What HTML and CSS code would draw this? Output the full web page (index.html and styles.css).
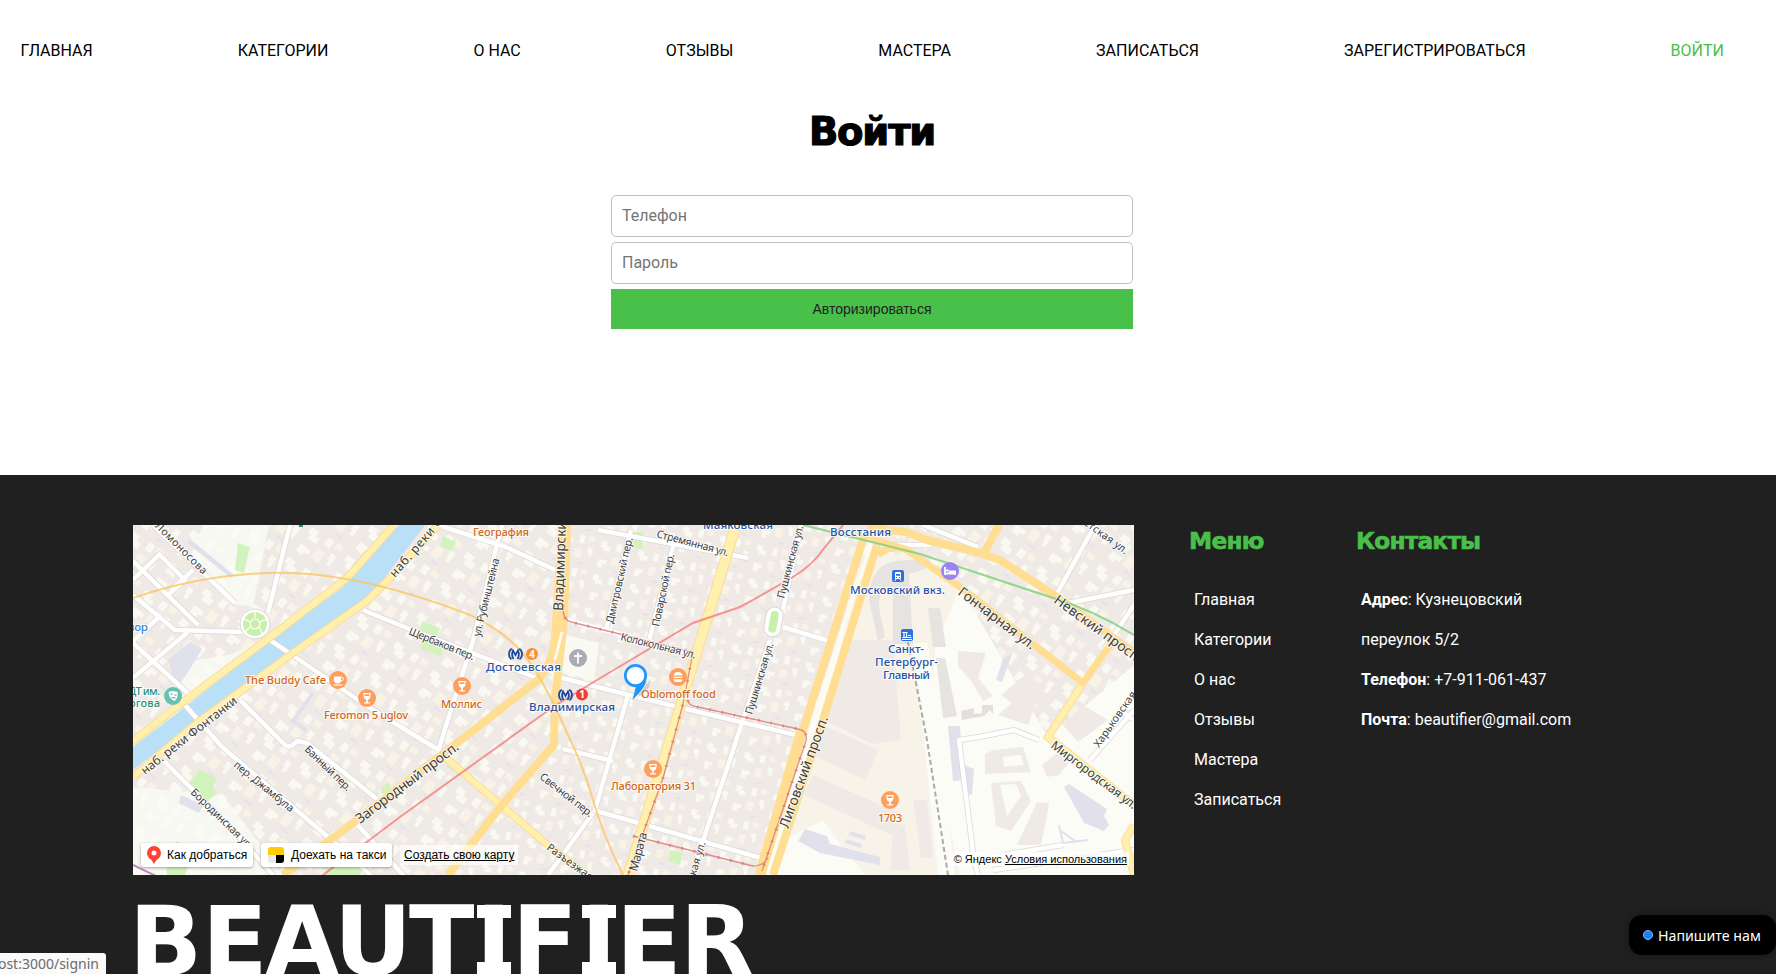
FILE: index.html
```html
<!DOCTYPE html>
<html lang="ru">
<head>
<meta charset="utf-8">
<title>Войти</title>
<link rel="stylesheet" href="styles.css">
</head>
<body>
<header class="header">
  <nav class="nav">
    <a class="nav-link">ГЛАВНАЯ</a>
    <a class="nav-link">КАТЕГОРИИ</a>
    <a class="nav-link">О НАС</a>
    <a class="nav-link">ОТЗЫВЫ</a>
    <a class="nav-link">МАСТЕРА</a>
    <a class="nav-link">ЗАПИСАТЬСЯ</a>
    <a class="nav-link">ЗАРЕГИСТРИРОВАТЬСЯ</a>
    <a class="nav-link active">ВОЙТИ</a>
  </nav>
</header>
<main class="main">
  <h1 class="title">Войти</h1>
  <form class="form">
    <input class="field" type="text" placeholder="Телефон">
    <input class="field" type="password" placeholder="Пароль">
    <button class="submit" type="button">Авторизироваться</button>
  </form>
</main>
<footer class="footer">
  <div class="left">
  <div class="map">
    <svg class="map-svg" width="1001" height="350" viewBox="0 0 1001 350">
      <defs>
        <pattern id="bl" width="46" height="38" patternUnits="userSpaceOnUse" patternTransform="rotate(38)">
          <rect width="46" height="38" fill="#f0eae7"/>
          <path d="M4 5h9v5h5v7H8v-5H4zM24 3h7v9h-7zM36 14h6v12h-4v-5h-2zM6 25h12v5h-4v4H6z" fill="#f9f8f1"/>
          <path d="M22 18h9v12h-9zM34 2h8v6h-8z" fill="#f8f2e7"/>
          <path d="M27 33h8v2h-8z" fill="#e3e3ea"/>
        </pattern>
        <pattern id="bm" width="38" height="34" patternUnits="userSpaceOnUse" patternTransform="rotate(14)">
          <rect width="38" height="34" fill="#f0eae7"/>
          <path d="M3 4h6v4h4v5H6v-3H3zM19 3h5v8h-5zM29 13h5v9h-3v-4h-2zM4 22h8v4H9v4H4z" fill="#f9f8f1"/>
          <path d="M17 17h7v9h-7zM28 2h6v5h-6z" fill="#f8f2e7"/>
          <path d="M22 30h6v2h-6z" fill="#e3e3ea"/>
        </pattern>
        <symbol id="glass" viewBox="-9 -9 18 18">
          <circle r="9" fill="#ff9d5c"/>
          <path d="M-3.800-5h7.600l-.5 4.200Q2.700 1.500.8 1.800V4.200H3V5.500H-3V4.200H-.8V1.800Q-2.700 1.500-3.300-.8z" fill="#fff"/>
          <path d="M-2.500-3.700h5l-.2 1.700h-4.600z" fill="#ff9d5c"/>
        </symbol>
        <symbol id="metro" viewBox="0 0 15 12">
          <path d="M3.800.8Q1 2.500 1 6t2.500 5.200M11.200.8Q14 2.500 14 6t-2.500 5.200M5.500 11Q3 7 5 2.500L7.500 7 10 2.500Q12 7 9.500 11" fill="none" stroke="#1b4aa5" stroke-width="1.800"/>
        </symbol>
      </defs>
      <rect width="1001" height="350" fill="#fafcf5"/>
      <path d="M0 0H430L420 218 317 350H0z" fill="url(#bl)"/>
      <path d="M430 0H740L630 350H317L420 218z" fill="url(#bm)"/>
      <path d="M70 0h66L120 82 95 78 58 30zM95 130l40-15-80 60-20-35zM0 262L90 270 150 350H0z" fill="#fafcf5" opacity=".75"/>
      <path d="M740 0H1001V140L915 212 827 62 740 20z" fill="url(#bl)"/>
      <path d="M730 30l44-2 53 34-25 60-5 90 30 138H640l50-155z" fill="#f8f3e9"/>
      <path d="M714 115h46l8 100-28 4-50-24zM690 200l55 25-12 30-55-25zM680 250l90 40-7 22-92-42zM760 300h12l5 45h-20zM780 275h14l6 58h-12z" fill="#f0eae7"/>
      <path d="M736 75q0-42 40-40h14l2 9-16 5 4 70h-20V62q-14-2-14 20l6 30-7 4zM795 83h12l6 39h-13zM803 133h9l12 58-14 2z" fill="#e7e3e1"/>
      <path d="M780 118l15 0 27 232h-17L790 205z" fill="#fafcf5"/>
      <path d="M825 126l28 2-8 25 15 18-10 5-12-20-13-15zM868 170l24-20 18 10-15 40-30-10 14-12zM860 225l30-3 8 25-46 2v-20zM858 258l30-2 10 20-20 30-15-5zM904 277l-20 43h24l5-24 3-18zM909 240l15-12 12 10-10 12-12 2zM930 200l20-20 25 15-30 22z" fill="#f0eae7"/>
      <path d="M867 260l16-1 5 12-14 20zM870 232l18-2 3 10-20 2z" fill="#fafcf5"/>
      <path d="M829 195l22-4 6-6 3 5V180h-11v8l-8 1v-6l-13 3z" fill="#e4dfdc"/>
      <path d="M815 201h12l2 38 12 5-2 26-6-1-2-14-11 1zM931 262l5-3 38 25-3 7 5 9-5 6-20-8zM870 134l9-5-10 28-6-2zM35 135l22-18 12 7-12 20-14 20z" fill="#e1e1ec"/>
      <path d="M926 300l4 18 25-3M928 306l14 10" fill="none" stroke="#e1e1ec" stroke-width="2"/>
      <path d="M650 315l40-20 22 30 20 25h-90z" fill="#fafcf5"/>
      <path d="M672 304l22 7 3 8 50 13v8l-60-12-22-12zM717 306l16 5-1 4-16-5zM713 314l16 5-1 4-16-5z" fill="#e1e1ec"/>
      <path d="M57 14l44 36-3 3-44-35zM48 270l22 10-4 8-20-10z" fill="#e1e1ec"/>
      <path d="M180 168l-20 28 14 10" fill="none" stroke="#e1e1ec" stroke-width="4"/>
      <path d="M433 110l33 8-5 38-37-10z" fill="#fafaf3"/>
      <!-- parks -->
      <g fill="#d3f3bd">
        <path d="M289 96l18 7-3 8 9 9-5 12-22-10 5-7-6-6zM61 252l5-8 18 10-4 8 4 6-15 13-12-14-2-8zM32 325l12-9 16 12-8 22H34zM248 263l8-6 3 10-11 2zM500 7h10v16h-10zM310 11l13 6-4 9-11-5zM537 325l13 3-3 12-12-4zM105 18l12 4-6 26-9-3z"/>
        <path d="M195 338l34 6-2 6h-34z"/>
      </g>
      <!-- river -->
      <path d="M266 0H292L250 55 230 75 162 125 65 195 0 245V222L52 182 140 112 209 63z" fill="#b9e0f7"/>
      <!-- side streets: outline, then surface -->
      <g fill="none" stroke="#dcd8d4" stroke-width="6" stroke-linejoin="round">
        <path d="M20 0L102 78M28 28L0 55M25 28L52 55 35 70M0 36L65 100M60 45L38 65M0 70l42 35 70 2M28 90l-30 28M55 107L0 153M0 118l60 55M157 0L135 88M137 115L240 185 304 224M50 178l40 45 130 110 20 20M30 235l70 70 40 45M107 175l45 45q5 4 12-4l10 2 75 60M230 85l44 18 130 50M222 297l50 55M305 226l35-110 29-116M305 0l68 22 60 28M425 152l63 16 65 16 114 27M498 5L473 105M541 18L515 120M495 170l-33 115M430 224l50 12M460 285l175 50M460 288l-45 62M668 0l-18 85M637 115l-28 83-42 127-10 30M650 102l46 14M465 5l150 28M748 20h50M922 72L962 0M935 78l66-13M1001 80l-30 45M957 235l44-50M1000 195l-15-12M845 350l-4-15-15-120 20-3 35-7 25 10M840 335l90-15M860 345l141-20M790 0l55 22"/>
      </g>
      <g fill="none" stroke="#fff" stroke-width="4.500" stroke-linejoin="round">
        <path d="M20 0L102 78M28 28L0 55M25 28L52 55 35 70M0 36L65 100M60 45L38 65M0 70l42 35 70 2M28 90l-30 28M55 107L0 153M0 118l60 55M157 0L135 88M137 115L240 185 304 224M50 178l40 45 130 110 20 20M30 235l70 70 40 45M107 175l45 45q5 4 12-4l10 2 75 60M230 85l44 18 130 50M222 297l50 55M305 226l35-110 29-116M305 0l68 22 60 28M425 152l63 16 65 16 114 27M434 95l120 32M498 5L473 105M541 18L515 120M495 170l-33 115M430 224l50 12M460 285l175 50M460 288l-45 62M668 0l-18 85M637 115l-28 83-42 127-10 30M650 102l46 14M465 5l150 28M748 20h50M922 72L962 0M935 78l66-13M1001 80l-30 45M957 235l44-50M1000 195l-15-12M845 350l-4-15-15-120 20-3 35-7 25 10M840 335l90-15M860 345l141-20M790 0l55 22"/>
      </g>
      <circle cx="122" cy="99" r="15" fill="#fff" stroke="#dcd8d4"/>
      <circle cx="122" cy="99" r="12" fill="#c9efad"/>
      <path d="M122 93v-6M117 97l-8-4M117 102l-6 6M126 102l4 8M127 97l7-3" stroke="#fff" stroke-width="1.200"/>
      <circle cx="122" cy="99" r="5" fill="none" stroke="#fff" stroke-width="1.200"/>
      <rect x="632" y="82" width="17" height="30" rx="8.500" fill="#fff" stroke="#dcd8d4" transform="rotate(10 641 97)"/>
      <rect x="636.500" y="86" width="8" height="22" rx="4" fill="#c9efad" transform="rotate(10 641 97)"/>
      <!-- yellow embankments -->
      <g fill="none" stroke="#fcdc96" stroke-width="8">
        <path d="M261 0L214 53 140 110 50 177 0 216M305 0L258 52 234 76 160 128 64 198 0 252M307 228l63 54 47 40 37 28M950 158L915 212 1001 280M1001 300l-9 15 9 35"/>
        <path d="M603 0L547 182 495 350" stroke-width="11"/>
      </g>
      <g fill="none" stroke="#fff0ae" stroke-width="6">
        <path d="M261 0L214 53 140 110 50 177 0 216M305 0L258 52 234 76 160 128 64 198 0 252M307 228l63 54 47 40 37 28M950 158L915 212 1001 280M1001 300l-9 15 9 35"/>
        <path d="M603 0L547 182 495 350" stroke-width="9"/>
      </g>
      <!-- orange avenues -->
      <g fill="none" stroke="#ffdd91" stroke-width="9" stroke-linejoin="round">
        <path d="M150 350L224 295 337 208 405 155q14-15 17-40l7-115M434 0l-3 95-9 80-1 45-54 62-52 68" stroke-width="8"/>
        <path d="M733 5L669 208 627 350M744 20L690 195 640 350" stroke-width="8"/>
        <path d="M669 205L627 350" stroke-width="11"/>
        <path d="M735 0l18 5 20 2 21 8 53 13 20 7 57 37 77 56M852 26l14-26" stroke-width="8"/>
        <path d="M722 8q30 10 52 17l53 37 123 96 30-42M745 30q14-12 30-5" stroke-width="7"/>
      </g>
      <path d="M738 20L681 190" stroke="#fffaf0" stroke-width="3"/>
      <path d="M422 135l7-28" stroke="#fffaf0" stroke-width="3"/>
      <!-- tram and metro lines -->
      <g fill="none">
        <path d="M430 80q-1 15 8 17l122 30-10 52-20 74-35 97M555 175q0 6 10 7l100 22q10 2 8 12l-44 130M500 311l120 30q10 0 15-8" stroke="#d6757c" stroke-width="1.300" opacity=".8"/>
        <path d="M430 80q-1 15 8 17l122 30-10 52-20 74-35 97M555 175q0 6 10 7l100 22q10 2 8 12l-44 130M500 311l120 30" stroke="#d6757c" stroke-width="3" stroke-dasharray="1.500 11" opacity=".8"/>
        <path d="M190 350L267 292 420 182 464 155 560 98 607 82 620 75 660 52Q680 40 692 22L710 0" stroke="#f26d6d" stroke-width="2" opacity=".7"/>
        <path d="M0 73Q80 46 157 48T337 90Q380 110 400 142T434 208Q450 240 460 275T490 350" stroke="#fbc665" stroke-width="2" opacity=".8"/>
        <path d="M670 0L787 29 920 73Q960 85 1001 110" stroke="#7ccf7c" stroke-width="2.200" opacity=".8"/>
        <path d="M0 340l25 12" stroke="#c08ac0" stroke-width="2"/>
        <path d="M775 117L794 215 815 350" stroke="#aaa" stroke-width="2" stroke-dasharray="5 3"/>
      </g>
      <!-- street names -->
      <g class="street">
        <text transform="translate(17 -3) rotate(45)" textLength="75">. Ломоносова</text>
        <text class="mid" transform="translate(262 53) rotate(-49)" textLength="92">наб. реки Фон</text>
        <text class="mid" transform="translate(12 250) rotate(-38)" textLength="118">наб. реки Фонтанки</text>
        <text transform="translate(275 109) rotate(22)" textLength="70">Щербаков пер.</text>
        <text transform="translate(347 112) rotate(-76)" textLength="80">ул. Рубинштейна</text>
        <text class="big" transform="translate(430 86) rotate(-88)" textLength="98">Владимирский</text>
        <text transform="translate(480 99) rotate(-77)" textLength="88">Дмитровский пер.</text>
        <text transform="translate(526 102) rotate(-78)" textLength="74">Поварской пер.</text>
        <text transform="translate(523 12) rotate(15)" textLength="74">Стремянная ул.</text>
        <text transform="translate(487 115) rotate(14)" textLength="77">Колокольная ул.</text>
        <text transform="translate(651 74) rotate(-75)" textLength="75">Пушкинская ул.</text>
        <text transform="translate(619 190) rotate(-73)" textLength="74">Пушкинская ул.</text>
        <text class="big" transform="translate(655 304) rotate(-70)" textLength="118">Лиговский просп.</text>
        <text class="big" transform="translate(227 299) rotate(-37)" textLength="125">Загородный просп.</text>
        <text transform="translate(171 225) rotate(44)" textLength="60">Банный пер.</text>
        <text transform="translate(100 241) rotate(39)" textLength="74">пер. Джамбула</text>
        <text transform="translate(57 268) rotate(44)" textLength="79">Бородинская ул</text>
        <text transform="translate(406 253) rotate(38)" textLength="64">Свечной пер.</text>
        <text transform="translate(413 324) rotate(36)" textLength="68">Разъезжая ул</text>
        <text class="mid" transform="translate(504 347) rotate(-75)" textLength="40">Марата</text>
        <text transform="translate(561 356) rotate(-73)" textLength="40">ская ул.</text>
        <text class="big" transform="translate(824 69) rotate(37)" textLength="93">Гончарная ул.</text>
        <text class="big" transform="translate(920 77) rotate(36)" textLength="105">Невский просп.</text>
        <text transform="translate(950 -1) rotate(36)" textLength="52">етская ул.</text>
        <text transform="translate(966 223) rotate(-55)" textLength="74">Харьковская у</text>
        <text class="mid" transform="translate(917 222) rotate(37)" textLength="104">Миргородская ул.</text>
        <text transform="translate(900 342) rotate(-7)" textLength="70" opacity=".3">Товарный пер.</text>
      </g>
      <!-- places -->
      <g class="place">
        <text x="340" y="11" textLength="56">География</text>
        <text x="112" y="159" textLength="81">The Buddy Cafe</text>
        <text x="191" y="194" textLength="84">Feromon 5 uglov</text>
        <text x="308" y="183" textLength="41">Моллис</text>
        <text x="508" y="173" textLength="75">Oblomoff food</text>
        <text x="478" y="265" textLength="85">Лаборатория 31</text>
        <text x="745" y="297" textLength="24">1703</text>
      </g>
      <g class="place station">
        <text x="570" y="4" textLength="70">Маяковская</text>
        <text x="697" y="11" textLength="61">Восстания</text>
        <text x="717" y="69" textLength="95">Московский вкз.</text>
        <text x="755" y="128" textLength="36">Санкт-</text>
        <text x="742" y="141" textLength="63">Петербург-</text>
        <text x="750" y="154" textLength="47">Главный</text>
        <text x="353" y="146" textLength="75">Достоевская</text>
        <text x="396" y="186" textLength="86">Владимирская</text>
        <text class="shop" x="-5" y="106" textLength="20">вор</text>
      </g>
      <g class="place theatre">
        <text x="-5" y="170" textLength="32">ДТ им.</text>
        <text x="-4" y="182" textLength="31">огова</text>
      </g>
      <path d="M166 0h4v2h-4z" fill="#25917f"/>
      <use href="#glass" x="225" y="164" width="18" height="18"/>
      <use href="#glass" x="320" y="152" width="18" height="18"/>
      <use href="#glass" x="511" y="235" width="18" height="18"/>
      <use href="#glass" x="748" y="266" width="18" height="18"/>
      <circle cx="205" cy="155" r="9" fill="#ff9d5c"/>
      <path d="M201 151.500h7v5q-1 2-3.500 2t-3.500-2z" fill="#fff"/>
      <path d="M200.500 160h9" stroke="#fff" stroke-width="1.200"/>
      <circle cx="208.500" cy="154" r="1.800" fill="none" stroke="#fff"/>
      <circle cx="545" cy="152" r="9" fill="#ff9d5c"/>
      <path d="M540.500 150.500q.5-3.500 4.500-3.500t4.500 3.500zM540.500 151.800h9v1.200h-9zM540.500 154.300h9q0 2.700-2 2.700h-5q-2 0-2-2.700z" fill="#fff"/>
      <circle cx="40" cy="171" r="9" fill="#66c1ae"/>
      <path d="M35.500 167l4-1 5 1q1 6-3 9-5-1-6-9z" fill="#fff"/>
      <path d="M37.500 169h2M41.500 170h2M38.500 173q2-1 4 0" stroke="#38a38f" fill="none"/>
      <circle cx="445" cy="133" r="9" fill="#a9acb2"/>
      <path d="M445 127.500v11M441 131h8" stroke="#fff" stroke-width="1.800"/>
      <circle cx="817" cy="46" r="9" fill="#9b82f7"/>
      <path d="M812 42v8M812 48.500h10V50M822 50v-3.500H816" stroke="#fff" stroke-width="1.800" fill="none"/>
      <circle cx="814.500" cy="45.500" r="1.300" fill="#fff"/>
      <use href="#metro" x="375" y="123" width="15" height="12"/>
      <circle cx="399" cy="129" r="6" fill="#f8912f"/>
      <text class="num" x="399" y="132.500">4</text>
      <use href="#metro" x="425" y="164" width="15" height="12"/>
      <circle cx="449" cy="169.500" r="6" fill="#ef3d35"/>
      <text class="num" x="449" y="173">1</text>
      <rect x="759" y="45" width="12" height="12" rx="2" fill="#2c6fe0"/>
      <rect x="762" y="47" width="6" height="7" rx="1" fill="#fff"/>
      <path d="M763 49h4v1.800h-4zM763 52h1v1h-1zM766 52h1v1h-1z" fill="#2c6fe0"/>
      <path d="M763 54l-1.200 2M767 54l1.200 2" stroke="#fff"/>
      <rect x="768" y="104" width="12" height="12" rx="2" fill="#2c6fe0"/>
      <path d="M769.500 107.500h5M771 107.500v5M773.500 108v4M769.500 112.500h9M775 110.500h3M769 114.500h10" fill="none" stroke="#fff" stroke-width="1.200"/>
      <!-- marker -->
      <path d="M503 174l14-20q3 7-8 15z" fill="#777" opacity=".25"/>
      <path d="M499.500 175L503 161 513.500 156Q511 164 499.500 175z" fill="#1e98ff"/>
      <circle cx="502.500" cy="150.500" r="10.200" fill="#fff" stroke="#1e98ff" stroke-width="2.700"/>
    </svg>
    <div class="map-bar">
      <span class="map-btn route"><svg width="14" height="18" viewBox="0 0 14 18"><path d="M7 0a7 7 0 0 1 7 7c0 3.500-2 5.500-4.500 7L7 18 4.500 14C2 12.500 0 10.500 0 7a7 7 0 0 1 7-7z" fill="#ff4433"/><circle cx="7" cy="7" r="2.500" fill="#fff"/></svg>Как добраться</span>
      <span class="map-btn taxi"><svg width="16" height="16" viewBox="0 0 16 16"><path d="M0 8V3a3 3 0 0 1 3-3h10a3 3 0 0 1 3 3v5z" fill="#fc0"/><path d="M0 8h8v8H3a3 3 0 0 1-3-3z" fill="#e8e8e8"/><path d="M8 8h8v5a3 3 0 0 1-3 3H8z"/></svg>Доехать на такси</span>
      <span class="map-create">Создать свою карту</span>
      <span class="map-copy">© Яндекс <u>Условия использования</u></span>
    </div>
  </div>
  <svg class="brand" width="640" height="84" viewBox="0 0 640 84">
    <text class="brand-text" y="75" x="-4 69 132 201 276 343 379 448 483 547">BEAUTIFIER</text>
    <path d="M344 5h34v13h-34zM344 62h34v13h-34zM449 5h34v13h-34zM449 62h34v13h-34z" fill="#fff"/>
  </svg>
  </div>
  <section class="col menu">
    <h2 class="col-title">Меню</h2>
    <ul class="list">
      <li>Главная</li><li>Категории</li><li>О нас</li><li>Отзывы</li><li>Мастера</li><li>Записаться</li>
    </ul>
  </section>
  <section class="col">
    <h2 class="col-title">Контакты</h2>
    <ul class="list">
      <li><b>Адрес</b>: Кузнецовский<br>переулок 5/2</li>
      <li><b>Телефон</b>: +7-911-061-437</li>
      <li><b>Почта</b>: beautifier@gmail.com</li>
    </ul>
  </section>
</footer>
<div class="status">ost:3000/signin</div>
<div class="chat"><span class="dot"></span>Напишите нам</div>
</body>
</html>
```
FILE: styles.css
```css
* { box-sizing: border-box; }
body { margin: 0; height: 974px; overflow: hidden; background: #fff; font-family: Roboto, sans-serif; font-size: 16px; color: #000; }
.header { height: 100px; padding: 0 52px 0 20.600px; }
.nav { height: 100px; display: flex; justify-content: space-between; align-items: center; }
.nav-link.active { color: #49c04a; }
.main { height: 375px; width: 522px; margin-left: 611px; }
.title { margin: 0; height: 95px; padding-top: 7px; text-align: center; font: bold 38.500px/50px "DejaVu Sans", sans-serif; letter-spacing: -1.200px; -webkit-text-stroke: 1.200px #000; }
.form { display: flex; flex-direction: column; gap: 5px; }
.field { height: 42px; border: 1px solid #bfbfbf; border-radius: 5px; padding: 0 10px 1px; font: 16px Roboto, sans-serif; outline: none; }
.field::placeholder { color: #757575; }
.submit { height: 40px; border: 0; background: #49c04a; color: #202020; font: 14px "Liberation Sans", Arial, sans-serif; }
.footer { height: 499px; padding: 50px 0 0 133px; display: flex; background: #202020; color: #fff; overflow: hidden; }
.left { width: 1001px; margin-right: 55px; flex: none; }
.map { position: relative; width: 1001px; height: 350px; overflow: hidden; }
.map-svg { display: block; }
.street text { font: 10.600px "Noto Sans", sans-serif; fill: #3c4043; stroke: #fff; stroke-width: 2px; stroke-opacity: .75; paint-order: stroke; }
.street .mid { font-size: 12.200px; }
.street .big { font-size: 13.800px; }
.place text { font: 500 11.100px "Noto Sans", sans-serif; fill: #d0681b; stroke: #fff; stroke-width: 2px; stroke-opacity: .8; paint-order: stroke; }
.station text { fill: #2453a6; font-size: 11.600px; }
.station .shop { fill: #3a85dd; }
.theatre text { fill: #25917f; }
.num { font: bold 10px "Noto Sans", sans-serif; fill: #fff; text-anchor: middle; }
.map-bar { position: absolute; left: 8px; right: 5px; bottom: 8px; height: 24px; display: flex; align-items: center; font: 12px "Liberation Sans", Arial, sans-serif; color: #000; white-space: nowrap; }
.map-btn { height: 24px; display: flex; align-items: center; background: #fff; border-radius: 3px; box-shadow: 0 1px 3px rgba(0,0,0,.35); }
.route { width: 112px; padding-left: 6px; gap: 6px; margin-right: 8px; }
.taxi { width: 131px; padding-left: 7px; gap: 7px; margin-right: 8px; }
.map-create { padding: 3px 4px; background: rgba(255,255,255,.65); text-decoration: underline; }
.map-copy { margin-left: auto; margin-top: 7px; padding: 1px 2px 1px 6px; font-size: 11px; background: rgba(255,255,255,.7); }
.brand { display: block; margin-top: 25px; }
.brand-text { font: bold 96px "DejaVu Sans", sans-serif; fill: #fff; }
.menu { width: 167px; }
.col-title { margin: 0; height: 55px; font: bold 23.300px/31px "DejaVu Sans", sans-serif; letter-spacing: -.800px; color: #49c04a; -webkit-text-stroke: .600px #49c04a; }
.list { margin: 0; padding: 0 0 0 5px; list-style: none; line-height: 40px; }
.status { position: absolute; left: 0; bottom: 0; width: 106px; height: 21px; padding-right: 7px; display: flex; align-items: center; justify-content: flex-end; background: #fafafa; border-top-right-radius: 3px; font: 14px "Noto Sans", sans-serif; color: #6b6b6b; white-space: nowrap; }
.chat { position: absolute; left: 1629px; top: 915px; width: 147px; height: 40px; padding-left: 14px; display: flex; align-items: center; gap: 5px; border-radius: 13px; background: #000; box-shadow: 0 0 8px rgba(0,0,0,.3); color: #fff; font: 14.200px "Noto Sans", sans-serif; white-space: nowrap; }
.dot { width: 10px; height: 10px; border-radius: 50%; background: #1b80f5; border: 1px solid #8abdf7; }
```
